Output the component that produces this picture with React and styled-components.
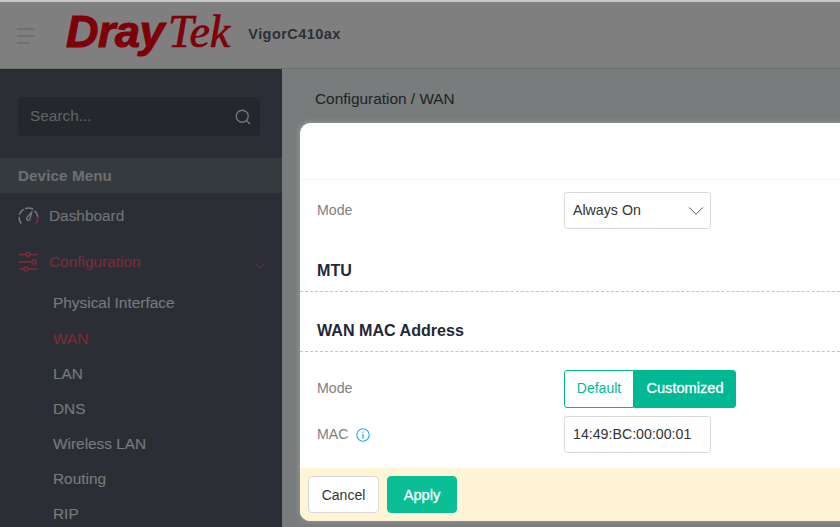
import React from "react";
import styled, { createGlobalStyle } from "styled-components";
import { ChevronDown, Search as SearchIcon } from "lucide-react";

const GlobalStyle = createGlobalStyle`
  html, body { margin: 0; padding: 0; height: 100%; overflow: hidden; }
  body { font-family: "Liberation Sans", Arial, sans-serif; font-size: 14px; }
`;

const Page = styled.div`
  position: relative;
  width: 840px;
  height: 527px;
  overflow: hidden;
  display: flex;
  flex-direction: column;
  background: #f0f8f8;
`;

const TopLine = styled.div`
  height: 2px;
  flex: none;
  background: #c9c9c9;
`;

const Header = styled.header`
  height: 66px;
  flex: none;
  display: flex;
  align-items: center;
  padding-left: 17px;
  background: #fff;
  border-bottom: 1px solid #dcdcdc;
`;

const Burger = styled.svg`
  width: 19px;
  height: 16px;
  flex: none;
  margin-top: 1px;
`;

const Logo = styled.div`
  display: flex;
  align-items: baseline;
  margin-left: 30px;
  margin-bottom: 6px;
  color: #fc0010;
  white-space: nowrap;
  line-height: 46px;
`;

const LogoDray = styled.span`
  font: italic 700 45px/46px "Liberation Sans", Arial, sans-serif;
  -webkit-text-stroke: 1.1px currentColor;
  letter-spacing: -0.5px;
`;

const LogoTek = styled.span`
  font: italic 400 46px/46px "Liberation Serif", "Times New Roman", serif;
  margin-left: 4px;
  -webkit-text-stroke: 0.7px currentColor;
`;

const Model = styled.div`
  margin-left: 18px;
  margin-bottom: 2px;
  font-size: 14.5px;
  font-weight: 700;
  letter-spacing: 0.45px;
  color: #56606c;
`;

const Body = styled.div`
  flex: 1;
  display: flex;
  min-height: 0;
`;

const Sidebar = styled.aside`
  width: 282px;
  flex: none;
  background: #565f6b;
  padding-top: 28px;
  box-sizing: border-box;
  overflow: hidden;
`;

const SearchBox = styled.div`
  height: 39px;
  margin: 0 22px 0 18px;
  padding: 0 8px 2px 12px;
  box-sizing: border-box;
  display: flex;
  align-items: center;
  justify-content: space-between;
  background: #484e56;
  border-radius: 4px;
  color: #c6c6c6;
  font-size: 15.4px;
`;

const SearchGlyph = styled(SearchIcon)`
  flex: none;
  margin-top: 3px;
`;

const SectionBand = styled.div`
  height: 35px;
  margin-top: 22px;
  padding-left: 18px;
  display: flex;
  align-items: center;
  background: #6a757c;
  color: #dcdde0;
  font-size: 15.2px;
  font-weight: 700;
  letter-spacing: 0.1px;
`;

const MenuRow = styled.div`
  height: 46px;
  box-sizing: border-box;
  padding: 0 17px 0 18px;
  display: flex;
  align-items: center;
  gap: 10px;
  font-size: 15.4px;
  color: ${(p) => (p.$active ? "#fa5670" : "#e8e8e8")};
`;

const MenuIcon = styled.svg`
  width: 21px;
  height: 20px;
  flex: none;
`;

const MenuLabel = styled.span`
  flex: 1;
  margin-bottom: 1px;
`;

const MenuChevron = styled(ChevronDown)`
  flex: none;
  margin: 8px -4px 0 0;
`;

const SubMenu = styled.div`
  display: grid;
  grid-auto-rows: 35px;
  padding-top: 1px;
`;

const SubItem = styled.div`
  padding-left: 53px;
  display: flex;
  align-items: center;
  font-size: 15.4px;
  color: ${(p) => (p.$active ? "#fa5670" : "#f3f3f3")};
  &:first-child {
    margin-top: -1px;
  }
`;

const Main = styled.main`
  flex: 1;
  padding: 21px 0 0 33px;
  font-size: 15.4px;
  color: #3f464c;
`;

const Mask = styled.div`
  position: absolute;
  inset: 2px 0 0 0;
  background: rgba(0, 0, 0, 0.5);
`;

const Modal = styled.div`
  position: absolute;
  left: 300px;
  top: 123px;
  width: 620px;
  height: 398px;
  display: flex;
  flex-direction: column;
  background: #fff;
  border-radius: 10px;
  overflow: hidden;
  color: #333;
  box-shadow: 0 0 5px 1px rgba(255, 255, 255, 0.22);
`;

const ModalHead = styled.div`
  height: 56px;
  flex: none;
  border-bottom: 1px solid #f6f6f6;
`;

const ModalContent = styled.div`
  flex: 1;
  padding-top: 12px;
  min-height: 0;
`;

const Field = styled.div`
  display: flex;
  align-items: center;
  padding-left: 17px;
  margin-top: ${(p) => p.$top || 0}px;
`;

const FieldLabel = styled.div`
  width: 247px;
  flex: none;
  display: flex;
  align-items: center;
  gap: 7px;
  padding-bottom: 2px;
  color: #808080;
  font-size: 14.2px;
`;

const Control = styled.div`
  width: 147px;
  height: 37px;
  box-sizing: border-box;
  display: flex;
  align-items: center;
  justify-content: space-between;
  padding: 0 8px 2px;
  border: 1px solid #d9d9d9;
  border-radius: 3px;
  background: #fff;
  color: #333;
  font-size: 14.2px;
`;

const SelectChevron = styled(ChevronDown)`
  flex: none;
  margin: 2px -7px 0 0;
`;

const SectionTitle = styled.div`
  height: ${(p) => p.$height}px;
  box-sizing: border-box;
  padding: ${(p) => p.$top}px 0 0 17px;
  border-bottom: 1px dashed #c4c4c4;
  color: #1f2937;
  font-size: 16.1px;
  line-height: 20px;
  font-weight: 700;
`;

const Toggle = styled.div`
  display: flex;
  height: 38px;
`;

const ToggleOption = styled.div`
  box-sizing: border-box;
  display: flex;
  align-items: center;
  justify-content: center;
  padding-bottom: ${(p) => (p.$on ? 3 : 2)}px;
  width: ${(p) => (p.$on ? 102 : 70)}px;
  border: 1px solid #00b894;
  border-radius: ${(p) => (p.$on ? "0 3px 3px 0" : "3px 0 0 3px")};
  background: ${(p) => (p.$on ? "#00b894" : "#fff")};
  color: ${(p) => (p.$on ? "#fff" : "#00b894")};
  font-size: ${(p) => (p.$on ? 14.6 : 14)}px;
  -webkit-text-stroke: ${(p) => (p.$on ? "0.3px" : "0")} currentColor;
`;

const Footer = styled.div`
  height: 53px;
  flex: none;
  box-sizing: border-box;
  display: flex;
  align-items: center;
  gap: 8px;
  padding-left: 8px;
  background: #fff4d6;
`;

const Button = styled.button`
  height: 37px;
  width: ${(p) => (p.$primary ? 70 : 71)}px;
  box-sizing: border-box;
  border: 1px solid ${(p) => (p.$primary ? "#0abf95" : "#d9d9d9")};
  border-radius: 4px;
  background: ${(p) => (p.$primary ? "#0abf95" : "#fff")};
  color: ${(p) => (p.$primary ? "#fff" : "#333")};
  font: 400 ${(p) => (p.$primary ? 14.6 : 14)}px "Liberation Sans", Arial, sans-serif;
  -webkit-text-stroke: ${(p) => (p.$primary ? "0.3px" : "0")} currentColor;
  padding: 0;
`;

const InfoGlyph = styled.svg`
  width: 14px;
  height: 14px;
  flex: none;
  margin-top: 2px;
`;

const subItems = ["Physical Interface", "WAN", "LAN", "DNS", "Wireless LAN", "Routing", "RIP"];

function GaugeIcon() {
  return (
    <MenuIcon viewBox="0 0 21 20" fill="none" strokeWidth="1.6" strokeLinecap="round" stroke="#eeeeee">
      <path d="M2.8 17 A9.4 9.4 0 0 1 1.2 11.5" />
      <path d="M1.6 8 A9.4 9.4 0 0 1 5.2 3.6" />
      <path d="M7.6 2.4 A9.4 9.4 0 0 1 14.6 3" />
      <path d="M17 5.2 A9.4 9.4 0 0 1 19.7 10.5" />
      <path d="M19.8 11.5 A9.4 9.4 0 0 1 18.2 17" stroke="#fa5670" />
      <path d="M8.8 12 L14 5.6 L11.8 13.4 A1.6 1.6 0 0 1 8.8 12 Z" strokeLinejoin="round" strokeWidth="1.3" />
    </MenuIcon>
  );
}

function SlidersIcon() {
  return (
    <MenuIcon viewBox="0 0 21 20" fill="none" strokeWidth="1.5" stroke="#fa5670">
      <path d="M1 2.5 H8 M12 2.5 H19.5" />
      <circle cx="10" cy="2.5" r="2" />
      <path d="M1 10 H14 M18 10 H19.5" />
      <circle cx="16" cy="10" r="2" />
      <path d="M1 17 H6 M10 17 H19.5" />
      <circle cx="8" cy="17" r="2" />
    </MenuIcon>
  );
}

function InfoIcon() {
  return (
    <InfoGlyph viewBox="0 0 14 14" fill="none" stroke="#2aa5ef" strokeWidth="1.1">
      <circle cx="7" cy="7" r="6.2" />
      <path d="M7 6 V10.4" strokeWidth="1.3" />
      <path d="M7 3.4 V4.8" strokeWidth="1.3" />
    </InfoGlyph>
  );
}

export default function App() {
  return (
    <Page>
      <GlobalStyle />
      <TopLine />
      <Header>
        <Burger viewBox="0 0 19 16" fill="none" stroke="#d2d8de" strokeWidth="1.5">
          <path d="M0 1 H18 M0 8 H18 M0 15 H13" />
        </Burger>
        <Logo>
          <LogoDray>Dray</LogoDray>
          <LogoTek>Tek</LogoTek>
        </Logo>
        <Model>VigorC410ax</Model>
      </Header>
      <Body>
        <Sidebar>
          <SearchBox>
            <span>Search...</span>
            <SearchGlyph size={18} strokeWidth={1.7} color="#f0f0f0" />
          </SearchBox>
          <SectionBand>Device Menu</SectionBand>
          <MenuRow>
            <GaugeIcon />
            <MenuLabel>Dashboard</MenuLabel>
          </MenuRow>
          <MenuRow $active>
            <SlidersIcon />
            <MenuLabel>Configuration</MenuLabel>
            <MenuChevron size={18} strokeWidth={1.3} />
          </MenuRow>
          <SubMenu>
            {subItems.map((item) => (
              <SubItem key={item} $active={item === "WAN"}>
                {item}
              </SubItem>
            ))}
          </SubMenu>
        </Sidebar>
        <Main>Configuration / WAN</Main>
      </Body>
      <Mask />
      <Modal>
        <ModalHead />
        <ModalContent>
          <Field>
            <FieldLabel>Mode</FieldLabel>
            <Control>
              Always On
              <SelectChevron size={26} strokeWidth={0.9} color="#555" />
            </Control>
          </Field>
          <SectionTitle $height={63} $top={31}>
            MTU
          </SectionTitle>
          <SectionTitle $height={60} $top={28}>
            WAN MAC Address
          </SectionTitle>
          <Field $top={18}>
            <FieldLabel>Mode</FieldLabel>
            <Toggle>
              <ToggleOption>Default</ToggleOption>
              <ToggleOption $on>Customized</ToggleOption>
            </Toggle>
          </Field>
          <Field $top={8}>
            <FieldLabel>
              MAC <InfoIcon />
            </FieldLabel>
            <Control>14:49:BC:00:00:01</Control>
          </Field>
        </ModalContent>
        <Footer>
          <Button>Cancel</Button>
          <Button $primary>Apply</Button>
        </Footer>
      </Modal>
    </Page>
  );
}
